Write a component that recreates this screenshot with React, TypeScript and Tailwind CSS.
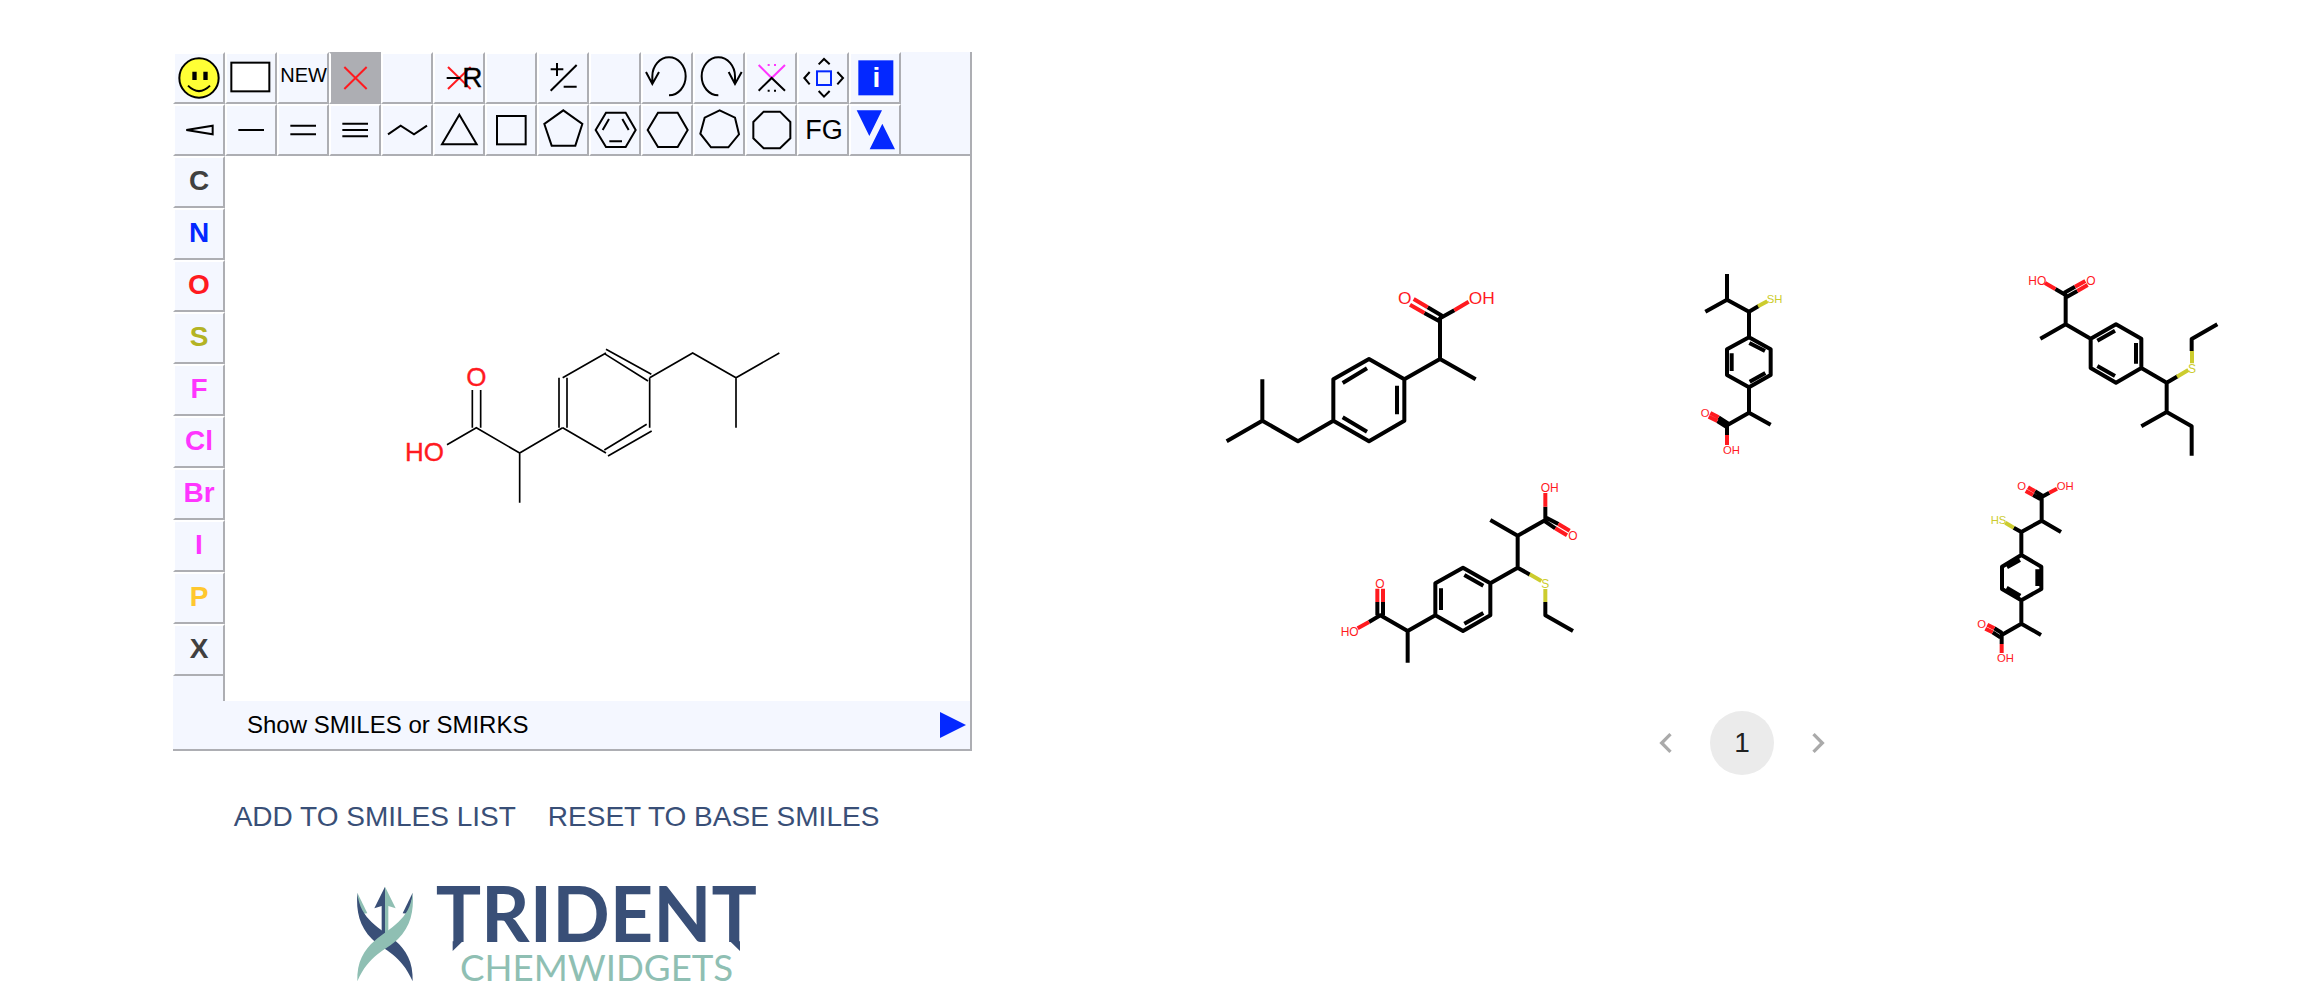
import React from "react";

const RED = "#ff1a1f";
const BLUE = "#0428ff";
const MAGENTA = "#ff35ff";
const SULFUR = "#cccc2e";
const NAVY = "#394f77";
const TEAL = "#8fbfb3";

type Tool = { label: string; active?: boolean; icon?: React.ReactNode };

const HEX = "20,78 51,26 110,26 140,78 110,129 51,129";

const actionTools: Tool[] = [
  {
    label: "About",
    icon: (
      <>
        <circle cx="78" cy="78" r="59" fill="#ffff35" />
        <path d="M58 59h13v25h-13zM91 59h13v25h-13z" fill="#000" stroke="none" />
        <path d="M45 101Q78 134 111 101" />
      </>
    ),
  },
  { label: "Query", icon: <rect x="19" y="32" width="114" height="86" fill="#fff" /> },
  {
    label: "New",
    icon: (
      <text x="80" y="91" fontSize="60" textAnchor="middle" fill="#000" stroke="none">
        NEW
      </text>
    ),
  },
  { label: "Delete", active: true, icon: <path d="M46 45L113 111M113 45L46 111" stroke={RED} /> },
  { label: "Unused 1" },
  {
    label: "Delete R group",
    icon: (
      <>
        <path d="M45 45L113 111M113 45L45 111" stroke={RED} />
        <path d="M41 78H82" />
        <text x="88" y="105" fontSize="84" fill="#000" stroke="#000" strokeWidth="1">
          R
        </text>
      </>
    ),
  },
  { label: "Unused 2" },
  { label: "Charge", icon: <path d="M41 52H79M60 33V72M41 116L119 39M80 104H119" /> },
  { label: "Unused 3" },
  {
    label: "Undo",
    icon: <path d="M84 130A50 57 0 0 0 84 16A50 57 0 0 0 34 73V96M15 60L34 96L54 60" />,
  },
  {
    label: "Redo",
    icon: <path d="M76 130A50 57 0 0 1 76 16A50 57 0 0 1 126 73V96M107 60L126 96L146 60" />,
  },
  {
    label: "Spiro ring",
    icon: (
      <>
        <path d="M41 39L80 78L120 39M68 39h6M87 39h6" stroke={MAGENTA} />
        <path d="M41 116L80 78L120 116M68 116h6M87 116h6" />
      </>
    ),
  },
  {
    label: "Move",
    icon: (
      <>
        <rect x="60" y="58" width="42" height="41" stroke={BLUE} />
        <path d="M65 37L81 21L98 37M65 117L81 134L98 117M38 60L22 78L38 97M121 60L138 78L121 97" />
      </>
    ),
  },
  {
    label: "Info",
    icon: (
      <>
        <rect x="28" y="25" width="105" height="105" fill={BLUE} stroke="none" />
        <text x="82" y="105" fontSize="84" fontWeight="700" textAnchor="middle" fill="#fff" stroke="none">
          i
        </text>
      </>
    ),
  },
];

const bondTools: Tool[] = [
  { label: "Stereo bond", icon: <polygon points="40,78 119,65 119,91" /> },
  { label: "Single bond", icon: <path d="M40 78H117" /> },
  { label: "Double bond", icon: <path d="M40 65H117M40 91H117" /> },
  { label: "Triple bond", icon: <path d="M40 59H117M40 78H117M40 97H117" /> },
  { label: "Chain", icon: <path d="M21 91L59 65L99 91L138 65" /> },
  { label: "Three ring", icon: <polygon points="79,32 131,121 27,121" /> },
  { label: "Four ring", icon: <rect x="36" y="36" width="86" height="85" /> },
  { label: "Five ring", icon: <polygon points="79,19 136,60 115,125 44,125 22,60" /> },
  {
    label: "Phenyl",
    icon: (
      <>
        <polygon points={HEX} />
        <path d="M60 45L41 78M100 45L119 78M61 112H99" />
      </>
    ),
  },
  { label: "Six ring", icon: <polygon points={HEX} /> },
  { label: "Seven ring", icon: <polygon points="80,19 126,41 138,91 106,130 54,130 22,89 35,41" /> },
  { label: "Eight ring", icon: <polygon points="56,23 105,23 136,54 136,103 105,133 56,133 25,103 25,54" /> },
  {
    label: "Functional groups",
    icon: (
      <text x="81" y="104" fontSize="81" textAnchor="middle" fill="#000" stroke="none">
        FG
      </text>
    ),
  },
  {
    label: "Input and output",
    icon: <path d="M23 19H99L61 96ZM100 59L138 136H62Z" fill={BLUE} stroke="none" />,
  },
];

const atoms = [
  { symbol: "C", color: "text-[#404040]" },
  { symbol: "N", color: "text-[#0428ff]" },
  { symbol: "O", color: "text-[#ff1a1f]" },
  { symbol: "S", color: "text-[#b3b324]" },
  { symbol: "F", color: "text-[#ff35ff]" },
  { symbol: "Cl", color: "text-[#ff35ff]" },
  { symbol: "Br", color: "text-[#ff35ff]" },
  { symbol: "I", color: "text-[#ff35ff]" },
  { symbol: "P", color: "text-[#ffc72e]" },
  { symbol: "X", color: "text-[#404040]" },
];

function ToolRow({ tools }: { tools: Tool[] }) {
  return (
    <div className="flex">
      {tools.map((tool) => (
        <button
          key={tool.label}
          type="button"
          aria-label={tool.label}
          className={
            tool.active
              ? "size-[52px] border-2 border-[#adaeb3] border-l-white bg-[#adaeb3]"
              : "size-[52px] border-2 border-[#adaeb3] border-t-white border-l-white bg-[#f4f7ff]"
          }
        >
          <svg viewBox="6 6 144 144" className="size-full" fill="none" stroke="#000" strokeWidth="6">
            {tool.icon}
          </svg>
        </button>
      ))}
    </div>
  );
}

function Editor() {
  return (
    <section aria-label="Molecule editor" className="w-full max-w-[799px]">
      <div className="flex">
        <div>
          <ToolRow tools={actionTools} />
          <ToolRow tools={bondTools} />
        </div>
        <div className="flex-1 border-r-2 border-b-2 border-[#adaeb3] bg-[#f4f7ff]" />
      </div>
      <div className="flex">
        <div className="flex w-[52px] flex-col">
          {atoms.map((atom) => (
            <button
              key={atom.symbol}
              type="button"
              className={`h-[52px] border-2 border-[#adaeb3] border-t-white border-l-white bg-[#f4f7ff] pb-0.5 text-[28px] leading-none font-bold ${atom.color}`}
            >
              {atom.symbol}
            </button>
          ))}
          <div className="h-[25px] border-r-2 border-[#adaeb3] bg-[#f4f7ff]" />
        </div>
        <div className="flex-1 border-r-2 border-[#adaeb3] bg-white">
          <svg
            viewBox="-495 -522 2235 1635"
            className="size-full"
            fill="none"
            stroke="#000"
            strokeWidth="5"
            role="img"
            aria-label="Ibuprofen"
          >
            <path d="M518 143L648 69M648 58L784 133M642 70L774 153M779 143V293M770 283L643 360M785 303L654 378M648 369L518 293M507 293V143M531 293V143M518 293L389 369V518M389 369L259 293L171 344M247 293V180M272 293V180M779 143L908 69L1038 143L1168 69M1038 143V293" />
            <g fill={RED} stroke={RED} strokeWidth="1" fontSize="78">
              <text x="229" y="168">O</text>
              <text x="45" y="393">HO</text>
            </g>
          </svg>
        </div>
      </div>
      <button
        type="button"
        className="flex h-[50px] w-full items-center justify-between border-r-2 border-b-2 border-[#adaeb3] bg-[#f4f7ff] pr-1 pl-[74px] text-2xl"
      >
        <span>Show SMILES or SMIRKS</span>
        <svg viewBox="0 0 26 26" className="size-[26px]" fill={BLUE} aria-hidden="true">
          <path d="M0 0L26 13L0 26Z" />
        </svg>
      </button>
    </section>
  );
}

type Label = { x: number; y: number; text: string; color: string };
type Molecule = {
  name: string;
  viewBox: string;
  size: number;
  bonds: string;
  red: string;
  yellow?: string;
  labels: Label[];
};

const molecules: Molecule[][] = [
  [
    {
      name: "Ibuprofen",
      viewBox: "3 30 900 624",
      size: 52,
      bonds:
        "M50 574L157 512V388M157 512L264 574L370 512L477 574L583 512V388L477 327L370 388V512M398 502L471 545M561 493V407M471 355L398 399M583 388L690 327L797 388M690 327V205L733 181M696 197L653 172M687 213L643 189",
      red: "M733 181L776 155M653 172L611 147M643 189L600 164",
      labels: [
        { x: 564, y: 163, text: "O", color: RED },
        { x: 776, y: 163, text: "OH", color: RED },
      ],
    },
    {
      name: "Thiol derivative",
      viewBox: "-264 30 900 624",
      size: 34,
      bonds:
        "M141 72V149L76 185M141 149L207 185V262L272 298V375L207 412L141 375V298L207 262M208 279L255 303M256 369L209 395M155 363V310M207 412V488L272 524M207 488L141 526V555M144 520L116 502M138 530L112 513M207 185L236 168",
      red: "M116 502L91 489M112 513L86 500M141 555V585",
      yellow: "M234 169L262 154",
      labels: [
        { x: 260, y: 160, text: "SH", color: SULFUR },
        { x: 62, y: 501, text: "O", color: RED },
        { x: 129, y: 613, text: "OH", color: RED },
      ],
    },
    {
      name: "Ethyl sulfide derivative",
      viewBox: "-80 30 900 624",
      size: 36,
      bonds:
        "M122 266L198 223V135L167 117M194 128L226 110M201 141L233 123M198 223L273 266L349 223L425 266V354L349 398L273 354V266M293 272L346 242M409 341V279M346 378L293 348M425 354L501 398L534 379M501 398V486L425 529M501 486L576 529V617M576 303V267L653 223",
      red: "M167 117L136 99M226 110L257 93M233 123L264 105",
      yellow: "M532 380L566 360M577 340V303",
      labels: [
        { x: 86, y: 105, text: "HO", color: RED },
        { x: 260, y: 105, text: "O", color: RED },
        { x: 565, y: 368, text: "S", color: SULFUR },
      ],
    },
  ],
  [
    {
      name: "Ethyl sulfide diacid",
      viewBox: "-42 -6 900 624",
      size: 36,
      bonds:
        "M263 578V483L181 436L147 456M172 436V396M189 436V396M263 483L346 436V340L429 293L511 340V436L429 483L346 436M363 420V355M433 315L490 347M490 429L433 461M511 340L593 293V197L511 150M593 197L676 150V110M679 143L715 162M672 152L706 175M593 293L630 314M676 396V436L759 483",
      red: "M147 456L113 475M172 396V356M189 396V356M676 110V69M715 162L749 182M706 175L741 196",
      yellow: "M629 313L664 333M676 357V396",
      labels: [
        { x: 166, y: 354, text: "O", color: RED },
        { x: 62, y: 497, text: "HO", color: RED },
        { x: 662, y: 67, text: "OH", color: RED },
        { x: 745, y: 210, text: "O", color: RED },
        { x: 664, y: 354, text: "S", color: SULFUR },
      ],
    },
    {
      name: "Thiol diacid",
      viewBox: "-216 -6 900 624",
      size: 34,
      bonds:
        "M333 186L275 152V81L298 68M277 77L255 64M271 87L249 75M275 152L214 186V255L274 290V357L214 391L156 357V290L214 255M210 270L171 292M262 298V348M211 377L170 353M214 391V461L273 495M214 461L155 495V522M156 489L133 475M151 502L128 487M214 186L191 173",
      red: "M298 68L321 56M255 64L234 52M249 75L227 63M133 475L112 464M128 487L106 476M155 522V549",
      yellow: "M191 173L166 158",
      labels: [
        { x: 202, y: 60, text: "O", color: RED },
        { x: 320, y: 60, text: "OH", color: RED },
        { x: 122, y: 163, text: "HS", color: SULFUR },
        { x: 82, y: 473, text: "O", color: RED },
        { x: 141, y: 576, text: "OH", color: RED },
      ],
    },
  ],
];

function MoleculeView({ molecule }: { molecule: Molecule }) {
  return (
    <div className="flex flex-1 justify-center">
      <svg
        viewBox={molecule.viewBox}
        className="h-[208px] w-[300px]"
        fill="none"
        strokeWidth="12"
        strokeLinejoin="round"
        role="img"
        aria-label={molecule.name}
      >
        <path d={molecule.bonds} stroke="#000" />
        <path d={molecule.red} stroke={RED} />
        {molecule.yellow && <path d={molecule.yellow} stroke={SULFUR} />}
        {molecule.labels.map((label) => (
          <text key={`${label.x}-${label.y}`} x={label.x} y={label.y} fontSize={molecule.size} fill={label.color} stroke="none">
            {label.text}
          </text>
        ))}
      </svg>
    </div>
  );
}

function Logo() {
  return (
    <svg viewBox="78 45 1206 300" className="h-[100px] w-[402px] overflow-visible" role="img" aria-label="Trident Chemwidgets">
      <path d="M165 50L133 115L155 108V187L165 196Z" fill={NAVY} />
      <path d="M165 50L197 115L175 108V187L165 196Z" fill={TEAL} />
      <path d="M82 68L112 130L97 131Q84 105 82 68Z" fill={TEAL} />
      <path d="M248 68L218 130L233 131Q246 105 248 68Z" fill={NAVY} />
      <path d="M82 68C78 125 88 168 126 207C165 244 212 252 248 334C250 275 228 240 196 212C150 172 90 150 82 68Z" fill={NAVY} />
      <path d="M248 68C252 125 242 168 204 207C165 244 118 252 82 334C80 275 102 240 134 212C180 172 240 150 248 68Z" fill={TEAL} />
      <path d="M368 214H398L368 243ZM1200 214H1230V243Z" fill={NAVY} />
      <g fontFamily="Lato, sans-serif" textAnchor="middle">
        <text x="799" y="217" fontSize="227" fontWeight="700" fill={NAVY}>
          TRIDENT
        </text>
        <text x="800" y="332" fontSize="110" fill={TEAL}>
          CHEMWIDGETS
        </text>
      </g>
    </svg>
  );
}

export default function App() {
  return (
    <main className="grid grid-cols-2 bg-white font-['Liberation_Sans',Arial,sans-serif] text-black">
      <div className="flex flex-col items-center pt-[52px] pr-[45px]">
        <div className="flex w-full justify-center pl-8">
          <Editor />
        </div>
        <div className="flex gap-8 pt-[42px] text-[28px] text-[#394f77]">
          <button type="button" className="h-12">ADD TO SMILES LIST</button>
          <button type="button" className="h-12">RESET TO BASE SMILES</button>
        </div>
        <div className="pt-11">
          <Logo />
        </div>
      </div>
      <div className="pt-[260px] pr-0.5 pl-3">
        {molecules.map((row, index) => (
          <div key={index} className="flex">
            {row.map((molecule) => (
              <MoleculeView key={molecule.name} molecule={molecule} />
            ))}
          </div>
        ))}
        <nav aria-label="Pagination" className="flex items-center justify-center gap-4 pt-[35px]">
          <button type="button" aria-label="Previous page" className="p-2 text-[#aaaaaa]">
            <svg viewBox="0 0 24 24" className="size-10" fill="currentColor" aria-hidden="true">
              <path d="M15.41 7.41L14 6l-6 6 6 6 1.41-1.41L10.83 12z" />
            </svg>
          </button>
          <button type="button" aria-current="page" className="size-16 rounded-full bg-[#ebebeb] text-[28px] text-[#212121]">
            1
          </button>
          <button type="button" aria-label="Next page" className="p-2 text-[#aaaaaa]">
            <svg viewBox="0 0 24 24" className="size-10" fill="currentColor" aria-hidden="true">
              <path d="M10 6L8.59 7.41 13.17 12l-4.58 4.59L10 18l6-6z" />
            </svg>
          </button>
        </nav>
      </div>
    </main>
  );
}
